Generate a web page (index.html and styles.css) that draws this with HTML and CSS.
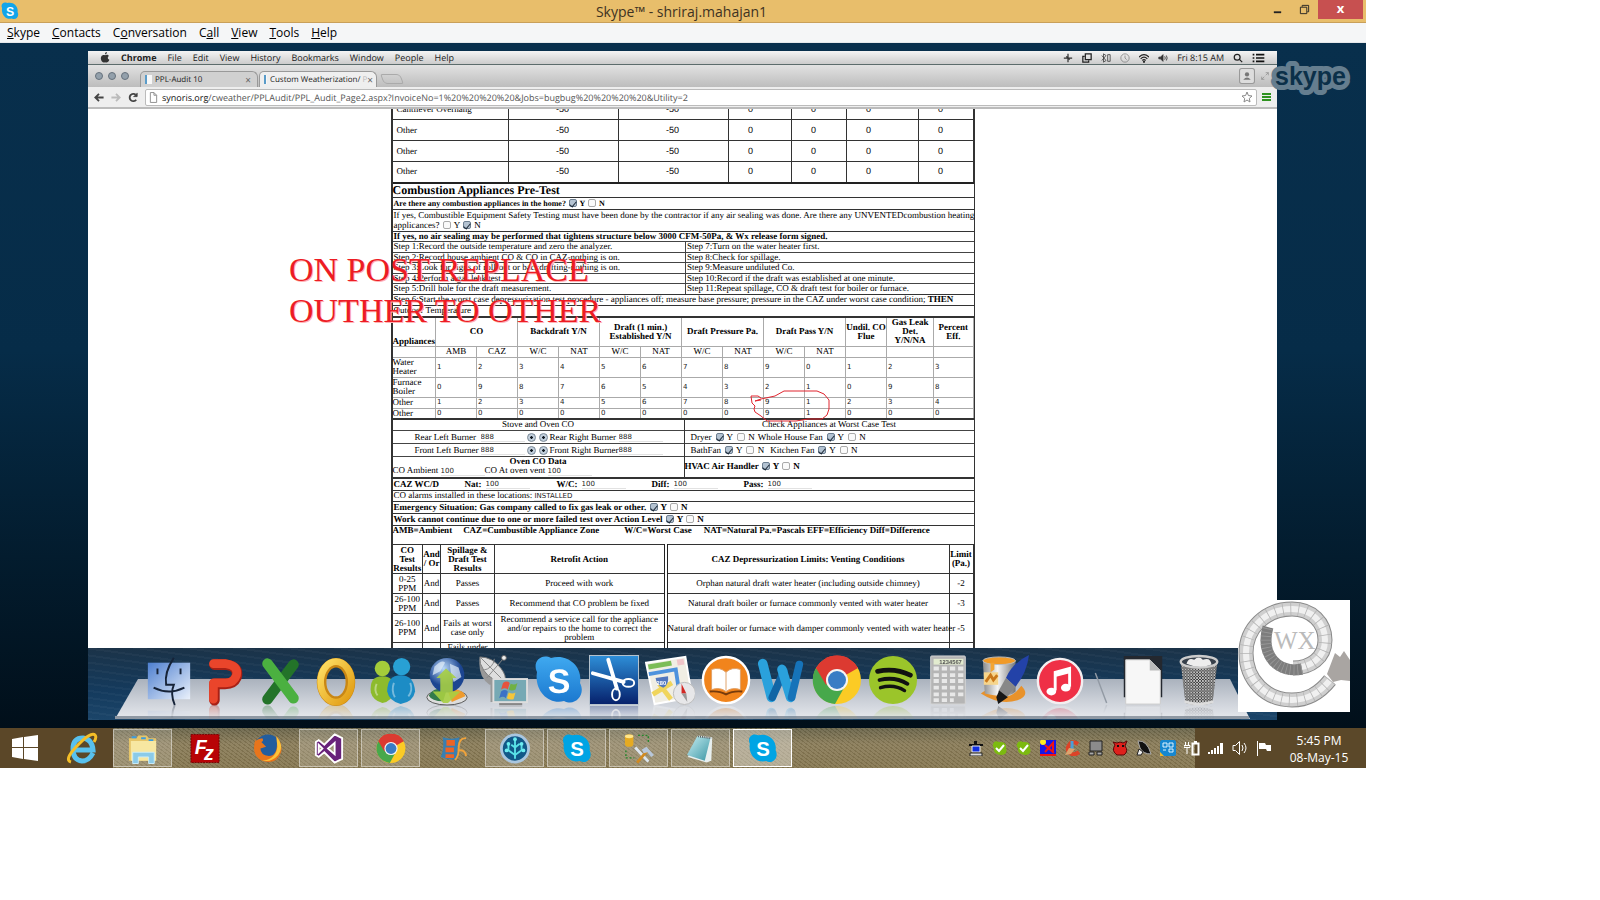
FILE: index.html
```html
<!DOCTYPE html>
<html lang="en">
<head>
<meta charset="utf-8">
<title>Skype™ - shriraj.mahajan1</title>
<link rel="stylesheet" href="styles.css">
</head>
<body>
<svg class="defs" aria-hidden="true">
  <defs>
    <linearGradient id="gBlue" x1="0" y1="0" x2="0" y2="1"><stop offset="0" stop-color="#3fa9f0"/><stop offset="1" stop-color="#1b78cf"/></linearGradient>
    <linearGradient id="gGold" x1="0" y1="0" x2="1" y2="1"><stop offset="0" stop-color="#ffe066"/><stop offset="1" stop-color="#e09a10"/></linearGradient>
    <linearGradient id="gFinder" x1="0" y1="0" x2="1" y2="1"><stop offset="0" stop-color="#4d7fd0"/><stop offset="1" stop-color="#eaf1fb"/></linearGradient>
    <linearGradient id="gScissors" x1="0" y1="0" x2="0" y2="1"><stop offset="0" stop-color="#2e8fd8"/><stop offset="1" stop-color="#06206b"/></linearGradient>
    <radialGradient id="gGlobe" cx=".4" cy=".3"><stop offset="0" stop-color="#b9d8f8"/><stop offset="1" stop-color="#1c4591"/></radialGradient>
    <linearGradient id="gMetal" x1="0" y1="0" x2="1" y2="0"><stop offset="0" stop-color="#8b8b8b"/><stop offset=".45" stop-color="#f4f4f4"/><stop offset="1" stop-color="#777"/></linearGradient>
    <linearGradient id="gPad" x1="0" y1="0" x2="1" y2="1"><stop offset="0" stop-color="#c8eef3"/><stop offset="1" stop-color="#3b97a5"/></linearGradient>
    <linearGradient id="gShelf" x1="0" y1="0" x2="0" y2="1"><stop offset="0" stop-color="#aab2bd"/><stop offset=".5" stop-color="#c9ced6"/><stop offset="1" stop-color="#e6e8ed"/></linearGradient>
    <pattern id="mesh" width="3" height="3" patternUnits="userSpaceOnUse"><path d="M0 0l3 3M3 0L0 3" stroke="#e2e2e2" stroke-width=".8"/></pattern>
    <symbol id="skype" viewBox="0 0 50 50"><path d="M3 17C-2 7 7-2 17 3c16-5 32 8 29 25 6 11-4 24-16 18C14 50 0 35 3 17z"/><text x="25" y="38" text-anchor="middle" class="skype-s">S</text></symbol>
    <symbol id="chrome" viewBox="0 0 50 50"><circle cx="25" cy="25" r="24" fill="#fbcb25"/><path d="M25 25L4 13a24 24 0 0 1 42 0z" fill="#dc3a31"/><path d="M4 13a24 24 0 0 0 19 36l10-18-14 0z" fill="#47a84b"/><path d="M25 13h21a24 24 0 0 0-42 0l10 17z" fill="#dc3a31"/><circle cx="25" cy="25" r="11" fill="#f4f4f4"/><circle cx="25" cy="25" r="9" fill="#397cc4"/></symbol>
  </defs>
</svg>

<main class="window">
  <header class="titlebar">
    <svg class="title-icon" viewBox="0 0 50 50" fill="#12a5ea"><use href="#skype"/></svg>
    <h1>Skype™ - shriraj.mahajan1</h1>
    <div class="win-controls">
      <button class="min" aria-label="Minimize"><svg viewBox="0 0 12 12"><path d="M2 9h8" stroke="#222" stroke-width="2"/></svg></button>
      <button class="max" aria-label="Restore"><svg viewBox="0 0 12 12" fill="none" stroke="#222"><path d="M1.500 3.500h7v7h-7zM3.500 3V1.500h7v7H9"/></svg></button>
      <button class="close" aria-label="Close">x</button>
    </div>
  </header>
  <nav class="menubar">
    <button><u>S</u>kype</button><button><u>C</u>ontacts</button><button>C<u>o</u>nversation</button><button>C<u>a</u>ll</button><button><u>V</u>iew</button><button><u>T</u>ools</button><button><u>H</u>elp</button>
  </nav>

  <section class="stage">
    <div class="mac">
      <div class="mac-menu">
        <svg class="apple" viewBox="0 0 12 14"><path d="M6 4c2-1 4-1 5 1-2 1-2 4 .5 5-1 3-3 4-5.500 3-2 1-4 0-5-3C0 6 2 3 6 4zM6 3c0-2 1-3 2.500-3 0 2-1 3-2.500 3z" fill="#333"/></svg>
        <b>Chrome</b><span>File</span><span>Edit</span><span>View</span><span>History</span><span>Bookmarks</span><span>Window</span><span>People</span><span>Help</span>
        <div class="mac-status">
          <svg viewBox="0 0 12 12" stroke="#333" stroke-width="1.500"><path d="M6 1v10M1 6h10M4 4l4 4"/></svg>
          <svg viewBox="0 0 12 12" fill="none" stroke="#222" stroke-width="1.500"><path d="M4 1h7v7H4zM3 4H1v7h7V9"/></svg>
          <svg viewBox="0 0 12 12" fill="none" stroke="#444"><path d="M1 3l5 6-3 2V1l3 2-5 6M8 2h3v8H8z"/></svg>
          <svg viewBox="0 0 12 12" fill="none" stroke="#888"><circle cx="6" cy="6" r="5"/><path d="M6 3v3l2 2"/></svg>
          <svg viewBox="0 0 12 12" fill="none" stroke="#222" stroke-width="1.500"><path d="M0 5q6-6 12 0M2 7q4-4 8 0M4 9q2-2 4 0"/><circle cx="6" cy="10.500" r=".6"/></svg>
          <svg viewBox="0 0 12 12" fill="#333" stroke="#333"><path d="M1 5h2l3-3v8L3 7H1z"/><path d="M8 4q1.500 2 0 4M10 3q2 3 0 6" fill="none"/></svg>
          <span>Fri 8:15 AM</span>
          <svg viewBox="0 0 12 12" fill="none" stroke="#222" stroke-width="1.500"><circle cx="5" cy="5" r="3.500"/><path d="M8 8l3 3"/></svg>
          <svg class="list" viewBox="0 0 14 12" stroke="#111" stroke-width="2"><path d="M0 2h2M4 2h10M0 6h2M4 6h10M0 10h2M4 10h10"/></svg>
        </div>
      </div>

      <div class="tabstrip">
        <i class="dot"></i><i class="dot"></i><i class="dot"></i>
        <div class="tab"><i class="fav"></i><span>PPL-Audit 10</span><button aria-label="Close tab">×</button></div>
        <div class="tab active"><i class="fav"></i><span>Custom Weatherization/ <em>P</em></span><button aria-label="Close tab">×</button></div>
        <i class="newtab"></i>
        <div class="tab-right">
          <svg class="user" viewBox="0 0 15 15"><rect x=".5" y=".5" width="14" height="14" rx="2" fill="#ddd" stroke="#999"/><circle cx="7.500" cy="6" r="2" fill="#777"/><path d="M4 11q3.500-4 7 0z" fill="#777"/></svg>
          <svg class="expand" viewBox="0 0 12 12" fill="none" stroke="#888"><path d="M1 7v4h4M1 11l4-4M7 1h4v4M11 1L7 5"/></svg>
        </div>
      </div>

      <div class="toolbar">
        <button aria-label="Back"><svg viewBox="0 0 12 12" fill="none" stroke="#444" stroke-width="2"><path d="M11 6H2M6 2L2 6l4 4"/></svg></button>
        <button aria-label="Forward"><svg viewBox="0 0 12 12" fill="none" stroke="#bbb" stroke-width="2"><path d="M1 6h9M6 2l4 4-4 4"/></svg></button>
        <button aria-label="Reload"><svg viewBox="0 0 12 12" fill="none" stroke="#444" stroke-width="2"><path d="M9.500 8.500A4 4 0 1 1 9 3"/><path d="M10.500 1v4h-4" fill="#444" stroke-width="1"/></svg></button>
        <div class="url">
          <svg viewBox="0 0 10 12" fill="#fff" stroke="#888"><path d="M1.500.5h4l3 3v8h-7zM5.500.5v3h3"/></svg>
          <p class="address"><a href="#page">synoris.org</a>/cweather/PPLAudit/PPL_Audit_Page2.aspx?InvoiceNo=1%20%20%20%20&amp;Jobs=bugbug%20%20%20%20&amp;Utility=2</p>
          <svg class="star" viewBox="0 0 12 12" fill="#fff" stroke="#888"><path d="M6 1l1.400 3.500L11 5 8.300 7.400 9 11 6 9 3 11l.7-3.600L1 5l3.600-.5z"/></svg>
        </div>
        <i class="burger"></i>
      </div>

      <div class="page" id="page">
        <div class="doc">
          <table class="leak">
            <colgroup><col class="w116"><col class="w110"><col class="w110"><col class="w63"><col class="w55"><col class="w72"><col></colgroup>
            <tr><td>Cantilever Overhang</td><td class="n5">-50</td><td class="n5">-50</td><td class="n0">0</td><td class="n0">0</td><td class="n0">0</td><td class="n0">0</td></tr>
            <tr><td>Other</td><td class="n5">-50</td><td class="n5">-50</td><td class="n0">0</td><td class="n0">0</td><td class="n0">0</td><td class="n0">0</td></tr>
            <tr><td>Other</td><td class="n5">-50</td><td class="n5">-50</td><td class="n0">0</td><td class="n0">0</td><td class="n0">0</td><td class="n0">0</td></tr>
            <tr><td>Other</td><td class="n5">-50</td><td class="n5">-50</td><td class="n0">0</td><td class="n0">0</td><td class="n0">0</td><td class="n0">0</td></tr>
          </table>
          <h2>Combustion Appliances Pre-Test</h2>
          <div class="row r12 small"><b>Are there any combustion appliances in the home? <label><input type="checkbox" checked> Y</label> <label><input type="checkbox"> N</label></b></div>
          <div class="row r22">If yes, Combustible Equipment Safety Testing must have been done by the contractor if any air sealing was done. Are there any UNVENTEDcombustion heating<br>applicances? <label><input type="checkbox"> Y</label> <label><input type="checkbox" checked> N</label></div>
          <div class="row r10"><b>If yes, no air sealing may be performed that tightens structure below 3000 CFM-50Pa, &amp; Wx release form signed.</b></div>
          <table class="steps">
            <tr><td>Step 1:Record the outside temperature and zero the analyzer.</td><td>Step 7:Turn on the water heater first.</td></tr>
            <tr><td>Step 2:Record house ambient CO &amp; CO in CAZ-nothing is on.</td><td>Step 8:Check for spillage.</td></tr>
            <tr><td>Step 3:Look for signs of roll-out or backdrafting-nothing is on.</td><td>Step 9:Measure undiluted Co.</td></tr>
            <tr><td>Step 4:Perform a gas leak test.</td><td>Step 10:Record if the draft was established at one minute.</td></tr>
            <tr><td>Step 5:Drill hole for the draft measurement.</td><td>Step 11:Repeat spillage, CO &amp; draft test for boiler or furnace.</td></tr>
          </table>
          <div class="row r11">Step 6:Start the worst case depressurization test procedure - appliances off; measure base pressure; pressure in the CAZ under worst case condition; <b>THEN</b></div>
          <div class="row r11">Outdoor Temperature</div>

          <table class="apps">
            <colgroup><col class="w43"><col class="w41"><col class="w41"><col class="w41"><col class="w41"><col class="w41"><col class="w41"><col class="w41"><col class="w41"><col class="w41"><col class="w41"><col class="w41"><col class="w47"><col></colgroup>
            <tr class="head"><th class="low">Appliances</th><th colspan="2">CO</th><th colspan="2">Backdraft Y/N</th><th colspan="2">Draft (1 min.) Established Y/N</th><th colspan="2">Draft Pressure Pa.</th><th colspan="2">Draft Pass Y/N</th><th>Undil. CO Flue</th><th>Gas Leak Det. Y/N/NA</th><th>Percent Eff.</th></tr>
            <tr class="sub"><td></td><td>AMB</td><td>CAZ</td><td>W/C</td><td>NAT</td><td>W/C</td><td>NAT</td><td>W/C</td><td>NAT</td><td>W/C</td><td>NAT</td><td></td><td></td><td></td></tr>
            <tr class="two"><td>Water Heater</td><td><input aria-label="CO AMB" value="1"></td><td><input aria-label="CO CAZ" value="2"></td><td><input aria-label="Backdraft W/C" value="3"></td><td><input aria-label="Backdraft NAT" value="4"></td><td><input aria-label="Draft W/C" value="5"></td><td><input aria-label="Draft NAT" value="6"></td><td><input aria-label="Pressure W/C" value="7"></td><td><input aria-label="Pressure NAT" value="8"></td><td><input aria-label="Pass W/C" value="9"></td><td><input aria-label="Pass NAT" value="0"></td><td><input aria-label="Flue" value="1"></td><td><input aria-label="Gas leak" value="2"></td><td><input aria-label="Percent" value="3"></td></tr>
            <tr class="two"><td>Furnace Boiler</td><td><input aria-label="CO AMB" value="0"></td><td><input aria-label="CO CAZ" value="9"></td><td><input aria-label="Backdraft W/C" value="8"></td><td><input aria-label="Backdraft NAT" value="7"></td><td><input aria-label="Draft W/C" value="6"></td><td><input aria-label="Draft NAT" value="5"></td><td><input aria-label="Pressure W/C" value="4"></td><td><input aria-label="Pressure NAT" value="3"></td><td><input aria-label="Pass W/C" value="2"></td><td><input aria-label="Pass NAT" value="1"></td><td><input aria-label="Flue" value="0"></td><td><input aria-label="Gas leak" value="9"></td><td><input aria-label="Percent" value="8"></td></tr>
            <tr class="one"><td>Other</td><td><input aria-label="CO AMB" value="1"></td><td><input aria-label="CO CAZ" value="2"></td><td><input aria-label="Backdraft W/C" value="3"></td><td><input aria-label="Backdraft NAT" value="4"></td><td><input aria-label="Draft W/C" value="5"></td><td><input aria-label="Draft NAT" value="6"></td><td><input aria-label="Pressure W/C" value="7"></td><td><input aria-label="Pressure NAT" value="8"></td><td><input aria-label="Pass W/C" value="9"></td><td><input aria-label="Pass NAT" value="1"></td><td><input aria-label="Flue" value="2"></td><td><input aria-label="Gas leak" value="3"></td><td><input aria-label="Percent" value="4"></td></tr>
            <tr class="one"><td>Other</td><td><input aria-label="CO AMB" value="0"></td><td><input aria-label="CO CAZ" value="0"></td><td><input aria-label="Backdraft W/C" value="0"></td><td><input aria-label="Backdraft NAT" value="0"></td><td><input aria-label="Draft W/C" value="0"></td><td><input aria-label="Draft NAT" value="0"></td><td><input aria-label="Pressure W/C" value="0"></td><td><input aria-label="Pressure NAT" value="0"></td><td><input aria-label="Pass W/C" value="9"></td><td><input aria-label="Pass NAT" value="1"></td><td><input aria-label="Flue" value="0"></td><td><input aria-label="Gas leak" value="0"></td><td><input aria-label="Percent" value="0"></td></tr>
          </table>

          <div class="stove">
            <div class="col">
              <div class="cell r11 mid">Stove and Oven CO</div>
              <div class="cell r13 burners"><label for="rl">Rear Left Burner</label><input class="val" id="rl" value="888"><input type="radio" name="a" checked aria-label="Rear left"><input type="radio" name="b" checked aria-label="Rear right"><label for="rr">Rear Right Burner</label><input class="val" id="rr" value="888"></div>
              <div class="cell r13 burners"><label for="fl">Front Left Burner</label><input class="val" id="fl" value="888"><input type="radio" name="c" checked aria-label="Front left"><input type="radio" name="d" checked aria-label="Front right"><label for="fr">Front Right Burner</label><input class="val" id="fr" value="888"></div>
              <div class="cell oven"><b>Oven CO Data</b><div class="pair"><label>CO Ambient <input class="val" value="100"></label><label>CO At oven vent <input class="val" value="100"></label></div></div>
            </div>
            <div class="col">
              <div class="cell r11 mid">Check Appliances at Worst Case Test</div>
              <div class="cell r13 checks"><span>Dryer</span><label><input type="checkbox" checked> Y</label><label><input type="checkbox"> N</label><span>Whole House Fan</span><label><input type="checkbox" checked> Y</label><label><input type="checkbox"> N</label></div>
              <div class="cell r13 checks"><span>BathFan</span><label><input type="checkbox" checked> Y</label><label><input type="checkbox"> N</label><span class="gap">Kitchen Fan</span><label><input type="checkbox" checked> Y</label><label><input type="checkbox"> N</label></div>
              <div class="cell hvac"><b>HVAC Air Handler <label><input type="checkbox" checked> Y</label> <label><input type="checkbox"> N</label></b></div>
            </div>
          </div>
          <div class="row r12 caz"><b>CAZ WC/D</b><label><b>Nat:</b><input class="val" value="100"></label><label><b>W/C:</b><input class="val" value="100"></label><label><b>Diff:</b><input class="val" value="100"></label><label><b>Pass:</b><input class="val" value="100"></label></div>
          <div class="row r11"><label>CO alarms installed in these locations: <input class="val" value="INSTALLED"></label></div>
          <div class="row r12"><b>Emergency Situation: Gas company called to fix gas leak or other. <label><input type="checkbox" checked> Y</label> <label><input type="checkbox"> N</label></b></div>
          <div class="row r12"><b>Work cannot continue due to one or more failed test over Action Level <label><input type="checkbox" checked> Y</label> <label><input type="checkbox"> N</label></b></div>
          <div class="legend"><b>AMB=Ambient</b><b>CAZ=Cumbustible Appliance Zone</b><b>W/C=Worst Case</b><b>NAT=Natural Pa.=Pascals EFF=Efficiency Diff=Difference</b></div>

          <table class="limits">
            <colgroup><col class="w30"><col class="w18"><col class="w54"><col class="w171"><col><col class="w24"></colgroup>
            <tr><th>CO Test Results</th><th>And / Or</th><th>Spillage &amp; Draft Test Results</th><th>Retrofit Action</th><th class="dbl">CAZ Depressurization Limits: Venting Conditions</th><th>Limit (Pa.)</th></tr>
            <tr class="mid2"><td>0-25 PPM</td><td>And</td><td>Passes</td><td>Proceed with work</td><td class="dbl">Orphan natural draft water heater (including outside chimney)</td><td>-2</td></tr>
            <tr class="mid2"><td>26-100 PPM</td><td>And</td><td>Passes</td><td>Recommend that CO problem be fixed</td><td class="dbl">Natural draft boiler or furnace commonly vented with water heater</td><td>-3</td></tr>
            <tr><td>26-100 PPM</td><td>And</td><td>Fails at worst case only</td><td>Recommend a service call for the appliance<br>and/or repairs to the home to correct the<br>problem</td><td class="dbl">Natural draft boiler or furnace with damper commonly vented with water heater</td><td>-5</td></tr>
            <tr><td></td><td></td><td class="top">Fails under</td><td></td><td class="dbl"></td><td></td></tr>
          </table>
        </div>
      </div>

      <div class="dock">
        <svg class="shelf" viewBox="0 0 1135 41" preserveAspectRatio="none"><path d="M23 0H1115L1135 40H0z" fill="url(#gShelf)"/><path d="M0 38.500H1134" stroke="#8f98a3" stroke-width="3"/></svg>
        <div class="icons">
          <svg viewBox="0 0 52 52"><rect x="4" y="8" width="44" height="38" fill="url(#gFinder)"/><path d="M31 3Q21 18 23 31h8Q27 40 32 52M10 34q16 8 32 0M14 14v6M38 14v6" fill="none" stroke="#162338" stroke-width="2"/></svg>
          <svg viewBox="0 0 52 52" fill="none" stroke-linecap="round" stroke-linejoin="round"><path d="M15 10h12q14 2 11 13-3 7-12 7H15v17" stroke="#a82015" stroke-width="11"/><path d="M14 9h13q13 2 11 12-3 8-11 8H14v17" stroke="#ea452b" stroke-width="9"/></svg>
          <svg viewBox="0 0 52 52" fill="none" stroke-linecap="round" stroke-width="11"><path d="M40 10L13 46" stroke="#237329"/><path d="M13 9l27 36" stroke="#4bb040"/></svg>
          <svg viewBox="0 0 52 52" fill="none"><ellipse cx="26" cy="28" rx="15" ry="20" stroke="#c98714" stroke-width="10"/><ellipse cx="26" cy="28" rx="16" ry="21" stroke="url(#gGold)" stroke-width="7"/></svg>
          <svg viewBox="0 0 52 52"><circle cx="16" cy="14" r="8" fill="#a4cc3a"/><path d="M4 39q-2-17 12-17t12 17q-2 9-12 11Q6 47 4 39z" fill="#8dbb2c"/><circle cx="36" cy="12" r="9" fill="#28a0d4"/><path d="M21 38q0-17 14-17t15 17q-2 11-15 13-12-3-14-13z" fill="#1c8cc5"/><path d="M10 30q-3 7 1 12M28 29q-3 8 1 15M45 29q3 8-2 14" stroke="#fff6" fill="none" stroke-width="2"/></svg>
          <svg viewBox="0 0 52 52"><ellipse cx="26" cy="44" rx="21" ry="8" fill="#ddd" stroke="#555"/><path d="M7 42q5-9 19-7l-4 13q-12 0-15-6z" fill="#337b4b"/><path d="M26 35q18 0 19 8l-14 6z" fill="#ef9b2e"/><circle cx="26" cy="21" r="18" fill="url(#gGlobe)"/><path d="M13 12q8-8 11-4l-5 9-8 4zM29 9l9 4 3 10-8 5-3-9z" fill="#e4f0fa" opacity=".7"/><path d="M22 50L11 38h8V24h-4l10-10 11 10h-4v14h8L27 50z" fill="#a7cf43" opacity=".9"/></svg>
          <svg viewBox="0 0 52 52"><path d="M15 27v20h14" stroke="#999" stroke-width="4" fill="none"/><path d="M2 2q-3 20 10 29 5 0 9-5z" fill="#999"/><path d="M2 2Q15 2 24 14q6 8 4 13-14 1-22-11Q1 9 2 2z" fill="#dedede" stroke="#777"/><path d="M2 2l24 24M27 3L9 24M5 16Q16 14 17 4" stroke="#888" fill="none"/><circle cx="27" cy="3" r="2.500" fill="#eee" stroke="#666"/><rect x="16" y="25" width="35" height="24" fill="#76a9b4" stroke="#ddd" stroke-width="2"/><path d="M22 50h24v2H22z" fill="#888"/><path d="M26 29q4-3 7 0l-2 7q-3-3-7 0z" fill="#e5533d"/><path d="M34 30q4 2 7-1l-2 7q-4 2-7 0z" fill="#70b144"/><path d="M24 38q4-3 7 0l-2 7q-3-3-7 0z" fill="#3c72c6"/><path d="M32 39q4 2 7 0l-2 7q-4 1-7-1z" fill="#f5c63b"/></svg>
          <svg viewBox="0 0 50 50" fill="url(#gBlue)"><use href="#skype"/></svg>
          <svg viewBox="0 0 52 52"><rect x=".5" y=".5" width="51" height="51" fill="url(#gScissors)" stroke="#bbc6d0"/><path d="M20 5l9 30M4 19l32 9" stroke="#fff" stroke-width="4" stroke-linecap="round"/><ellipse cx="28" cy="41" rx="4" ry="6" fill="none" stroke="#fff" stroke-width="2"/><ellipse cx="41" cy="29" rx="6" ry="4" fill="none" stroke="#fff" stroke-width="2"/></svg>
          <svg viewBox="0 0 52 52"><path d="M1 8l41-6 7 42-39 7z" fill="#f0eee4" stroke="#fff" stroke-width="2"/><path d="M3 10l24-4 1 5-24 4z" fill="#7cbd57"/><path d="M33 5l7-1 1 6-7 1z" fill="#efc5c9"/><path d="M4 20l28-5 5 33" stroke="#4d92dd" stroke-width="4" fill="none"/><path d="M8 41l20-12M14 29l13 17" stroke="#f0d55c" stroke-width="5"/><path d="M11 24l13-2q1 9-5 12-7-2-8-10z" fill="#5277be"/><text x="12" y="31" class="tiny">280</text><circle cx="41" cy="40" r="11.500" fill="#e7e7e9" stroke="#bbb"/><path d="M38 30l5 10h-5z" fill="#d32823"/><path d="M38 40h5l1 9z" fill="#999"/></svg>
          <svg viewBox="0 0 52 52"><circle cx="26" cy="26" r="24" fill="#f1841c" stroke="#fff" stroke-width="2.500"/><path d="M11 15q9-3 15 3 6-6 15-3v21q-9-3-15 2-6-5-15-2zM26 18v19" fill="#fff" stroke="#e0a067"/><path d="M9 38q10-1 17 3 7-4 17-3" stroke="#763b0c" stroke-width="2" fill="none"/></svg>
          <svg viewBox="0 0 52 52" fill="none" stroke-linecap="round"><path d="M7 9l9 35" stroke="#2aa1dc" stroke-width="10"/><path d="M29 17L17 44" stroke="#1165a5" stroke-width="8"/><path d="M27 15l9 29" stroke="#2aa1dc" stroke-width="10"/><path d="M45 10l-8 34" stroke="#1673b9" stroke-width="8"/></svg>
          <svg viewBox="0 0 50 50"><use href="#chrome"/></svg>
          <svg viewBox="0 0 52 52"><circle cx="26" cy="26" r="25" fill="#9bc52a"/><g fill="none" stroke="#111" stroke-linecap="round"><path d="M10 17q18-4 34 4" stroke-width="5"/><path d="M12 26q16-4 29 4" stroke-width="4"/><path d="M13 34q14-4 25 3" stroke-width="3.500"/></g></svg>
          <svg viewBox="0 0 52 52"><rect x="8" y="1" width="36" height="50" rx="1" fill="#b5b5b5" stroke="#d5d5d5"/><rect x="11" y="4" width="31" height="6" fill="#e2ebcf"/><path d="M11 14h32M11 21h32M11 27h32M11 34h32M11 41h32M11 47h21" stroke="#e8e8e8" stroke-width="4" stroke-dasharray="5.500 3"/><text x="17" y="9" class="tiny dark">1234567</text></svg>
          <svg viewBox="0 0 52 52"><path d="M2 40q10-8 20 0t22-8q10 10-4 15-18 6-38-7z" fill="#e8922b"/><path d="M4 6h34v32q-8 8-32 2z" fill="url(#gMetal)"/><ellipse cx="21" cy="6" rx="17" ry="4" fill="#f09a27" stroke="#bbb"/><path d="M12 8v10l4-3V8z" fill="#f2a534"/><path d="M5 18h15v13H5z" fill="#f6d58c"/><path d="M7 28l5-7 3 5 4-5" stroke="#c9781b" stroke-width="3" fill="none"/><path d="M52 0Q35 8 28 24l10 9Q50 18 52 0z" fill="#2342a8"/><path d="M28 24l10 9-9 11-9-6z" fill="#888"/><path d="M21 37l9 7-10 7-2-7z" fill="#171717"/></svg>
          <svg viewBox="0 0 52 52"><circle cx="26" cy="27" r="23" fill="#ef3046" stroke="#f4eef0" stroke-width="2.500"/><path d="M21 37V18l15-4v19" fill="none" stroke="#fff" stroke-width="3"/><path d="M21 18l15-4v5l-15 4z" fill="#fff"/><ellipse cx="17" cy="38" rx="5" ry="4" fill="#fff"/><ellipse cx="32" cy="34" rx="5" ry="4" fill="#fff"/></svg>
          <svg class="divider" viewBox="0 0 14 36"><path d="M1 2l12 32" stroke="#929aa4" stroke-width="1.500"/></svg>
          <svg viewBox="0 0 52 52"><path d="M6 1h40v43H6z" fill="#24282f"/><path d="M8 5h25l11 11v35H8z" fill="#f7f7f7" stroke="#ccc"/><path d="M33 5v11h11z" fill="#bbb"/></svg>
          <svg viewBox="0 0 52 52"><path d="M7 8l5 42q14 4 28 0l5-42z" fill="#333"/><path d="M7 8l5 42q14 4 28 0l5-42z" fill="url(#mesh)"/><ellipse cx="26" cy="7" rx="19" ry="6" fill="#37404b" stroke="#ccc" stroke-width="2.500"/><path d="M13 9q2-7 8-4 5-5 9 0 8-3 9 5-13 5-26-1z" fill="#eee"/><path d="M11 47q15 5 30 0v3q-15 5-30 0z" fill="#ddd"/></svg>
        </div>
      </div>
    </div>

    <svg class="watermark" viewBox="0 0 84 44"><text x="6" y="27">skype</text></svg>
    <p class="note">ON POST REPLACE<br>OUTHER TO OTHER</p>
    <svg class="loop" viewBox="0 0 80 32"><path d="M11 8L8 6 1 6l1 7 3 3-1 3 1 3 6 4 6 5h29l12-2h14l5-4 2-6v-9l-5-6-7-3H34l-9 5-14 3-6 2 6-1" fill="none" stroke="#e0252f"/></svg>
    <div class="wx">
      <svg viewBox="0 0 112 112">
        <g fill="none">
          <path d="M92 80C80 95 68 100 54 100 28 100 8 80 8 53 8 28 28 9 54 9 74 9 87 23 87 40 87 58 72 68 55 68" stroke="#8a8a8a" stroke-width="15"/>
          <path d="M92 80C80 95 68 100 54 100 28 100 8 80 8 53 8 28 28 9 54 9 74 9 87 23 87 40 87 58 72 68 55 68" stroke="#cfcfcf" stroke-width="13"/>
          <path d="M92 80C80 95 68 100 54 100 28 100 8 80 8 53 8 28 28 9 54 9 74 9 87 23 87 40 87 58 72 68 55 68" stroke="#f0f0f0" stroke-width="6"/>
          <path d="M92 80C80 95 68 100 54 100 28 100 8 80 8 53 8 28 28 9 54 9 74 9 87 23 87 40 87 58 72 68 55 68" stroke="#b4b4b4" stroke-width="13" stroke-dasharray=".8 7"/>
          <path d="M64 69C40 74 22 55 30 27" stroke="#7d7d7d" stroke-width="11"/>
          <path d="M64 69C40 74 22 55 30 27" stroke="#999" stroke-width="11" stroke-dasharray=".8 3"/>
        </g>
        <path d="M89 74l8-21 5 4 4-6 6 9v21l-9-1-8 2z" fill="#a9a5a2"/>
        <text x="36" y="49">WX</text>
      </svg>
    </div>
  </section>

  <footer class="taskbar">
    <button class="start" aria-label="Start"><svg viewBox="0 0 26 26" fill="#fff"><path d="M0 4l11-2v10H0zM12 2l14-2v12H12zM0 13h11v11L0 22zM12 13h14v13l-14-2z"/></svg></button>
    <button class="start ie" aria-label="Internet Explorer"><svg viewBox="0 0 32 32" fill="none"><path d="M27 21q-4 8-11 8-9-1-9-12T17 6q9 1 10 12H8" stroke="#58c1ee" stroke-width="5"/><path d="M5 30q-7-2 5-15Q25-1 29 3q2 2-1 7" stroke="#f4be27" stroke-width="3"/></svg></button>
    <div class="apps-bar">
      <button class="open" aria-label="File Explorer"><svg viewBox="0 0 32 32"><path d="M1 5h8l2-3h9l2 3h8v24H1z" fill="#e6c568"/><path d="M3 8h27v21H3z" fill="#f7e7a1"/><path d="M4 4h5M14 5h5M22 7h5" stroke="#3b9cdd" stroke-width="2"/><path d="M5 32V20h23v12h-6v-7H11v7z" fill="#8bcbe9" stroke="#cdeefa"/></svg></button>
      <button aria-label="FileZilla"><svg viewBox="0 0 32 32"><rect x="1" y="1" width="30" height="30" fill="#b80306" stroke="#750000" stroke-dasharray="2 1"/><text x="5" y="22" class="fz">F</text><text x="15" y="28" class="fz">z</text></svg></button>
      <button aria-label="Firefox"><svg viewBox="0 0 32 32"><circle cx="17" cy="15" r="14" fill="#235d9e"/><path d="M4 5Q-2 23 11 29q15 5 20-9 2-9-5-17 3 21-8 21-9-1-9-8l6-2-5-5q3-1 1-4-4 0-7 3z" fill="#e8751c"/><path d="M26 3q9 11 2 20-7 8-17 6 15-2 16-15z" fill="#fbc33a"/></svg></button>
      <button class="open" aria-label="Visual Studio"><svg viewBox="0 0 32 32"><path d="M22 1l8 4v22l-8 4-11-11-6 5-3-2V9l3-2 6 5zM22 10l-7 6 7 6zM5 12v8l4-4z" fill="#68217a" fill-rule="evenodd" stroke="#fff" stroke-width="2"/></svg></button>
      <button class="open" aria-label="Chrome"><svg viewBox="0 0 50 50"><use href="#chrome"/></svg></button>
      <button aria-label="Movie Maker"><svg viewBox="0 0 32 32"><path d="M5 4q10 3 18 0l-2 8v15q-8 2-18-2 4-9 2-21z" fill="#397fb2"/><path d="M9 7h9v6H9zM8 15h9v5H8zM8 22h9v4H8z" fill="#ed6426"/><path d="M30 5q-8-1-8 12 0 8-4 11M22 18q7-1 8 6" stroke="#f1a33b" stroke-width="2" fill="none"/></svg></button>
      <button class="open" aria-label="Source tree"><svg viewBox="0 0 32 32"><circle cx="16" cy="16" r="14.500" fill="#115888" stroke="#a9c6df" stroke-width="3"/><path d="M16 27V6M16 23l-7-5v-6M16 23l7-5v-6M16 15l-4-3M16 15l5-4" stroke="#59e1e7" stroke-width="2" fill="none"/><g fill="#6cecf0"><circle cx="16" cy="6" r="2"/><circle cx="9" cy="11" r="2"/><circle cx="23" cy="11" r="2"/><circle cx="7" cy="18" r="2"/><circle cx="25" cy="18" r="2"/></g></svg></button>
      <button class="open" aria-label="Skype"><svg viewBox="0 0 50 50" fill="#00a4e4"><use href="#skype"/></svg></button>
      <button class="open" aria-label="SQL tools"><svg viewBox="0 0 32 32"><rect x="1" y="1" width="9" height="13" rx="3" fill="#e5aa22"/><ellipse cx="5.500" cy="3" rx="4.500" ry="2" fill="#ffe58a"/><path d="M15 2h11v9M2 18v8h9" stroke="#25872d" stroke-width="1.500" fill="none" stroke-dasharray="2 2"/><path d="M12 15l14 15" stroke="#dce6f0" stroke-width="3"/><path d="M26 17L14 31" stroke="#d18a20" stroke-width="3"/><path d="M19 17l5-3 8 9-3 2-4-5-4 1z" fill="#b7c7da"/></svg></button>
      <button class="open" aria-label="Notepad"><svg viewBox="0 0 32 32"><path d="M13 2l15 2-1 25-5 2-20-6z" fill="#e8f0f0"/><path d="M12 3l14 2-6 24L1 23z" fill="url(#gPad)"/><path d="M13 3l14 2" stroke="#555" stroke-width="2" stroke-dasharray="1 1"/></svg></button>
      <button class="open current" aria-label="Skype call"><svg viewBox="0 0 50 50" fill="#00a4e4"><use href="#skype"/></svg></button>
    </div>
    <div class="tray">
      <svg viewBox="0 0 16 16"><path d="M1 4h14v2H1zM6 1h3v4H6z" fill="#111"/><path d="M4 6h8v6H4z" fill="#1330df" stroke="#eee"/><path d="M2 13h12v3H2z" fill="#ddd" stroke="#222"/></svg>
      <svg viewBox="0 0 16 16"><path d="M1 4q1-4 6-2 8-1 7 6 2 6-4 7Q1 15 2 8 0 6 1 4z" fill="#7cba10"/><path d="M4 8l3 3 5-6" stroke="#fff" stroke-width="2" fill="none"/></svg>
      <svg viewBox="0 0 16 16"><path d="M1 4q1-4 6-2 8-1 7 6 2 6-4 7Q1 15 2 8 0 6 1 4z" fill="#7cba10"/><path d="M4 8l3 3 5-6" stroke="#fff" stroke-width="2" fill="none"/></svg>
      <svg viewBox="0 0 16 16"><path d="M0 0h16v16H0z" fill="#1616e8"/><circle cx="3" cy="2" r="3" fill="#ffeb20"/><path d="M5 12l8-9v9M5 5l9 8" stroke="#f01414" stroke-width="2" fill="none"/><path d="M0 15h16" stroke="#f01414" stroke-width="2"/></svg>
      <svg viewBox="0 0 16 16" fill="none"><path d="M14 4Q8 0 5 5t1 8q4 3 9-1" stroke="#dd4327" stroke-width="4"/><path d="M8 1v8" stroke="#4a9fd8" stroke-width="3"/><path d="M5 8l6 1-4 5-6 1z" fill="#dba36d"/></svg>
      <svg viewBox="0 0 16 16"><path d="M2 1h12v10H2z" fill="#8b8b8b" stroke="#222"/><path d="M1 12h5v3H1zM9 12h5v3H9z" fill="#aaa" stroke="#222"/></svg>
      <svg viewBox="0 0 16 16"><path d="M3 5L1 2l4 1q3-2 6 0l4-2-2 5q4 5-1 9H5Q-1 11 3 5z" fill="#de211c" stroke="#570707"/><path d="M5 6h2M10 6h2" stroke="#111" stroke-width="2"/></svg>
      <svg viewBox="0 0 16 16"><path d="M2 1q9-1 13 13-8 0-11-6z" fill="#111" stroke="#aaa"/><path d="M3 9l4 3-2 3H1z" fill="#eee" stroke="#222"/></svg>
      <svg viewBox="0 0 16 16"><rect width="16" height="16" rx="2" fill="#1687d0"/><path d="M3 3h4v4H3zM9 3h4v4H9zM3 10h3M9 9h4v3H9z" stroke="#dff3ff" fill="none"/><path d="M0 12l4 4H0z" fill="#f1b72b"/></svg>
      <svg viewBox="0 0 16 16" fill="none" stroke="#fff"><path d="M8.500 3.500h6v11h-6zM10 2h3" stroke-width="2"/><path d="M0 5.500h6v2H0zM1.500 2v3M4.500 2v3M3 8v6" stroke-width="1"/></svg>
      <svg viewBox="0 0 16 16" fill="#fff"><path d="M0 12h2v2H0zM3 10h2v4H3zM6 8h2v6H6zM9 6h2v8H9zM12 3h3v11h-3z"/></svg>
      <svg viewBox="0 0 16 16" fill="none" stroke="#fff"><path d="M1 5.500h2.500l4-4v13l-4-4H1z"/><path d="M10 5q2 3 0 6M12 3q4 5 0 10"/></svg>
      <svg viewBox="0 0 16 16" fill="#fff"><path d="M1 1h1v15H1zM3 3h6l1 2h5v6h-4l-1-2H3z"/></svg>
    </div>
    <div class="clock"><span>5:45 PM</span><span>08-May-15</span></div>
  </footer>
</main>
</body>
</html>
```

FILE: styles.css
```css
* { box-sizing: border-box; }
body { margin: 0; background: #fff; font-family: "Open Sans", "Noto Sans", sans-serif; }
button { font: inherit; color: inherit; background: none; border: 0; padding: 0; }
svg { display: block; }
.defs { position: absolute; width: 0; height: 0; }
.window { position: relative; width: 100%; max-width: 1366px; }

/* window chrome */
.titlebar { position: relative; display: flex; align-items: center; height: 23px; background: #e8be6b; border-bottom: 1px solid #c9a05a; }
.title-icon { width: 18px; height: 18px; margin-left: 1px; }
.titlebar h1 { flex: 1; margin: 0; padding: 1px 0 0 80px; text-align: center; font-size: 14px; line-height: 22px; font-weight: 400; color: #3d3222; }
.win-controls { display: flex; align-self: flex-start; padding-right: 3px; }
.win-controls button { width: 27px; height: 19px; display: grid; place-items: center; }
.win-controls svg { width: 11px; height: 11px; }
.win-controls .close { width: 45px; padding-bottom: 4px; background: #c75050; color: #fff; font-size: 13px; line-height: 14px; font-weight: 700; }
.menubar { display: flex; gap: 12px; height: 20px; padding-left: 7px; background: #f5f6f7; font-size: 12px; line-height: 20px; color: #000; border-bottom: 1px solid #e6e8ea; }

.stage { position: relative; padding: 8px 89px 8px 88px; background: linear-gradient(#082f4c, #062c48 45%, #031c2e 75%, #010f1a); }
.mac { background: #fff; text-rendering: geometricPrecision; }
.mac-menu { display: flex; align-items: center; gap: 11px; height: 14px; padding: 0 12px; font-size: 9px; line-height: 14px; color: #222; background: linear-gradient(#f4f4f4, #ccc); border-bottom: 1px solid #5c6c6c; }
.apple { width: 10px; height: 11px; }
.mac-status { display: flex; align-items: center; gap: 9px; margin-left: auto; }
.mac-status svg { width: 10px; height: 10px; }
.mac-status .list { width: 13px; }

.tabstrip { display: flex; align-items: flex-end; height: 22px; padding-left: 7px; background: linear-gradient(#e2e2e2, #bdbdbd); font-size: 8px; color: #222; }
.dot { width: 8px; height: 8px; margin: 0 5px 7px 0; border-radius: 50%; background: #93a0ab; border: 1px solid #66717c; }
.tab { display: flex; align-items: center; width: 118px; height: 16px; margin-left: 6px; padding: 0 6px 0 4px; background: #d0d0d0; border: 1px solid #999; border-bottom: 0; border-radius: 5px 6px 0 0; white-space: nowrap; }
.tab.active { margin-left: 1px; background: #efefef; padding-right: 3px; }
.tab em { color: #bbb; font-style: normal; }
.tab span { flex: 1; }
.tab button { font-size: 10px; line-height: 12px; color: #666; }
.fav { width: 7px; height: 9px; margin-right: 3px; background: #f8f8f8; border-left: 2px solid #5a9cc9; }
.newtab { width: 20px; height: 10px; margin: 0 0 3px 5px; border: 1px solid #aaa; border-radius: 2px 4px; transform: skewX(20deg); }
.tab-right { display: flex; align-items: center; gap: 6px; margin: 0 8px 3px auto; }
.user { width: 16px; height: 16px; }
.expand { width: 8px; height: 8px; }
.toolbar { display: flex; align-items: center; gap: 5px; height: 22px; padding: 0 5px; background: #eee; border-bottom: 2px solid #bbb; }
.toolbar button svg { width: 12px; height: 11px; }
.url { display: flex; align-items: center; flex: 1; gap: 4px; height: 17px; margin-left: 1px; padding: 0 3px; background: #fff; border: 1px solid #bbb; border-radius: 2px; }
.url svg { width: 9px; height: 11px; }
.url .star { width: 12px; height: 12px; }
.address { flex: 1; margin: 0; padding-top: 1px; font-size: 9px; line-height: 14px; color: #555; white-space: nowrap; }
.address a { color: #111; text-decoration: none; }
.burger { width: 9px; height: 8px; margin: 0 1px 0 0; border-top: 2px solid #2f9320; border-bottom: 2px solid #2f9320; background: linear-gradient(#0000 1px, #2f9320 1px 3px, #0000 3px); }

/* audit form */
.page { height: 539px; overflow: hidden; background: #fff; }
.doc { max-width: 584px; margin: -11px auto 0; border: solid #333; border-width: 0 1px 0 2px; font-family: "Liberation Serif", serif; font-size: 9px; line-height: 9px; color: #000; }
table { width: 100%; table-layout: fixed; border-collapse: collapse; }
td, th { padding: 0; }
.leak { border-bottom: 2px solid #222; }
.leak tr { height: 21px; }
.leak td { padding-left: 4px; border: 1px solid #333; border-left-color: #555; }
.leak td:first-child { border-left: 0; }
.leak .n5 { padding-left: 47px; font-family: "Liberation Sans", sans-serif; }
.leak .n0 { padding-left: 19px; font-family: "Liberation Sans", sans-serif; }
.w116 { width: 116px; } .w110 { width: 110px; } .w63 { width: 63px; } .w55 { width: 55px; } .w72 { width: 72px; }
.doc h2 { margin: 0; font-size: 12px; line-height: 13px; font-weight: 700; }
.row { padding-left: 1px; border-top: 1px solid #333; white-space: nowrap; }
.r12 { height: 12px; line-height: 11px; }
.r22 { height: 22px; line-height: 10px; }
.r10 { height: 10px; line-height: 9px; }
.r11 { height: 11px; line-height: 9px; }
.r13 { height: 13px; line-height: 12px; }
.small { font-size: 8px; }
.doc input { margin: 0; color: #222; }
.doc input[type=checkbox] { appearance: none; display: inline-grid; place-items: start center; width: 8px; height: 8px; margin: 0 1px; border: 1px solid #aaa; border-radius: 2px; background: #fafafa; vertical-align: -1px; }
.doc input[type=checkbox]:checked { border-color: #6d7f91; background: #b4c3d2; }
.doc input[type=checkbox]:checked::after { content: ""; width: 3px; height: 6px; border: solid #1c2937; border-width: 0 1px 1px 0; transform: rotate(40deg); }
.doc input[type=radio] { appearance: none; width: 9px; height: 9px; border: 1px solid #788795; border-radius: 50%; background: radial-gradient(#101820 0 25%, #c2cfdc 30%); }
.steps td { height: 11px; padding-left: 1px; border-top: 1px solid #444; white-space: nowrap; }
.steps tr:nth-child(even) td { height: 10px; }
.steps td:first-child { width: 293px; }
.steps td + td { border-left: 1px solid #444; }

.apps { line-height: 9px; border-top: 2px solid #333; border-bottom: 2px solid #333; }
.apps th, .apps td { border: 1px solid #aaa; border-left-color: #bbb; }
.apps tr:first-child > * { border-top: 0; }
.apps tr > :first-child { border-left: 0; }
.apps .head { height: 29px; }
.apps .low { vertical-align: bottom; }
.apps .sub { height: 11px; text-align: center; }
.apps .two { height: 20px; }
.apps .one { height: 11px; }
.apps input { display: block; width: 100%; height: 9px; padding: 0 0 0 1px; border: 0; background: none; font: 7px/9px "DejaVu Sans", sans-serif; }
.apps td:first-child { padding-right: 10px; }
.w43 { width: 43px; } .w41 { width: 41px; } .w47 { width: 47px; }

.stove { display: grid; grid-template-columns: 291fr 290fr; border-bottom: 1px solid #333; }
.col + .col { border-left: 1px solid #333; }
.cell { border-bottom: 1px solid #444; white-space: nowrap; }
.mid { text-align: center; }
.val { width: 44px; height: 9px; padding: 0; border: 0; border-bottom: 1px solid #e2e2e2; background: none; font: 7px/8px "DejaVu Sans", sans-serif; }
.burners { display: grid; grid-template-columns: 64px 44px 10px 9px 67px 44px; align-items: center; padding-left: 22px; column-gap: 2px; }
.oven { height: 20px; text-align: center; line-height: 9px; border: 0; }
.pair { display: flex; }
.checks { display: flex; align-items: center; gap: 3px; padding-left: 6px; }
.checks .gap { padding-left: 3px; }
.hvac { height: 20px; line-height: 19px; border: 0; }
.caz { display: grid; grid-template-columns: 71px 92px 95px 92px 92px; }
.caz label { display: flex; gap: 4px; align-items: center; }
.legend { display: flex; height: 19px; border-top: 1px solid #333; white-space: nowrap; }
.legend b:nth-child(2) { margin-left: 11px; }
.legend b:nth-child(3) { margin-left: 25px; }
.legend b:nth-child(4) { margin-left: 12px; }
.limits { text-align: center; line-height: 9px; }
.limits tr { height: 29px; }
.limits .mid2 { height: 20px; }
.limits td, .limits th { border: 1px solid #333; }
.limits td:first-child, .limits th:first-child { border-left: 0; }
.limits .dbl { border-left: 4px double #222; white-space: nowrap; }
.limits .top { vertical-align: top; }
.w30 { width: 30px; } .w18 { width: 18px; } .w54 { width: 54px; } .w171 { width: 171px; } .w24 { width: 24px; }

/* dock */
.dock { position: relative; height: 72px; padding: 6px 53px 0 56px; overflow: hidden; background: repeating-linear-gradient(8deg, #ffffff08 0 2px, #0000 2px 7px), linear-gradient(#1b3348, #143a5d 60%, #1b4569); }
.shelf { position: absolute; left: 27px; bottom: 0; width: calc(100% - 54px); height: 41px; }
.icons { position: relative; display: flex; align-items: center; justify-content: space-between; }
.icons svg { flex: 0 0 50px; width: 50px; height: 52px; -webkit-box-reflect: below -2px linear-gradient(#0000 70%, #0005); }
.icons .divider { flex-basis: 14px; width: 14px; height: 34px; margin: 15px 4px 0; -webkit-box-reflect: none; }
.skype-s { font: 700 34px "Liberation Sans", sans-serif; fill: #fff; }
.tiny { font: 700 6px "Liberation Sans", sans-serif; fill: #fff; }
.dark { fill: #555; }

/* overlays on the shared screen */
.watermark { position: absolute; top: 15px; right: 13px; width: 84px; height: 44px; }
.watermark text { font: 700 25px "Liberation Sans", sans-serif; fill: #0b3049; stroke: #657e8f; stroke-width: 10px; stroke-linejoin: round; paint-order: stroke; }
.note { position: absolute; left: 289px; top: 206px; margin: 0; font: 34px/41px "Liberation Serif", serif; color: #ed1c24; text-shadow: 1px 1px 0 #ffb3b6; white-space: nowrap; }
.loop { position: absolute; left: 750px; top: 347px; width: 80px; height: 32px; }
.wx { position: absolute; right: 16px; bottom: 16px; width: 112px; height: 112px; background: #fff; }
.wx text { font: 25px "Liberation Serif", serif; fill: #bbb; }

/* taskbar */
.taskbar { display: flex; align-items: center; height: 40px; background: linear-gradient(90deg, #5b4728 113px, #0000 113px calc(100% - 171px), #5b4829 calc(100% - 171px)), repeating-linear-gradient(37deg, #00000012 0 1px, #ffffff12 1px 3px), linear-gradient(#696449, #8a7c58 40%, #85764f); }
.start { width: 50px; display: grid; place-items: center; }
.start svg { width: 26px; height: 26px; }
.ie { width: 63px; }
.ie svg { width: 32px; height: 32px; }
.apps-bar { display: flex; gap: 3px; }
.apps-bar button { width: 59px; height: 38px; display: grid; place-items: center; border: 1px solid #0000; }
.apps-bar .open { background: #ffffff2b; border-color: #ffffff70; }
.apps-bar .current { background: #ffffff60; border-color: #fff; }
.apps-bar svg { width: 30px; height: 31px; }
.fz { font: italic 700 21px "Liberation Sans", sans-serif; fill: #fff; }
.tray { display: flex; gap: 8px; margin-left: auto; }
.tray svg { width: 16px; height: 16px; }
.clock { display: flex; flex-direction: column; width: 94px; padding-top: 1px; text-align: center; font-size: 12px; line-height: 17px; color: #fff; }
```
